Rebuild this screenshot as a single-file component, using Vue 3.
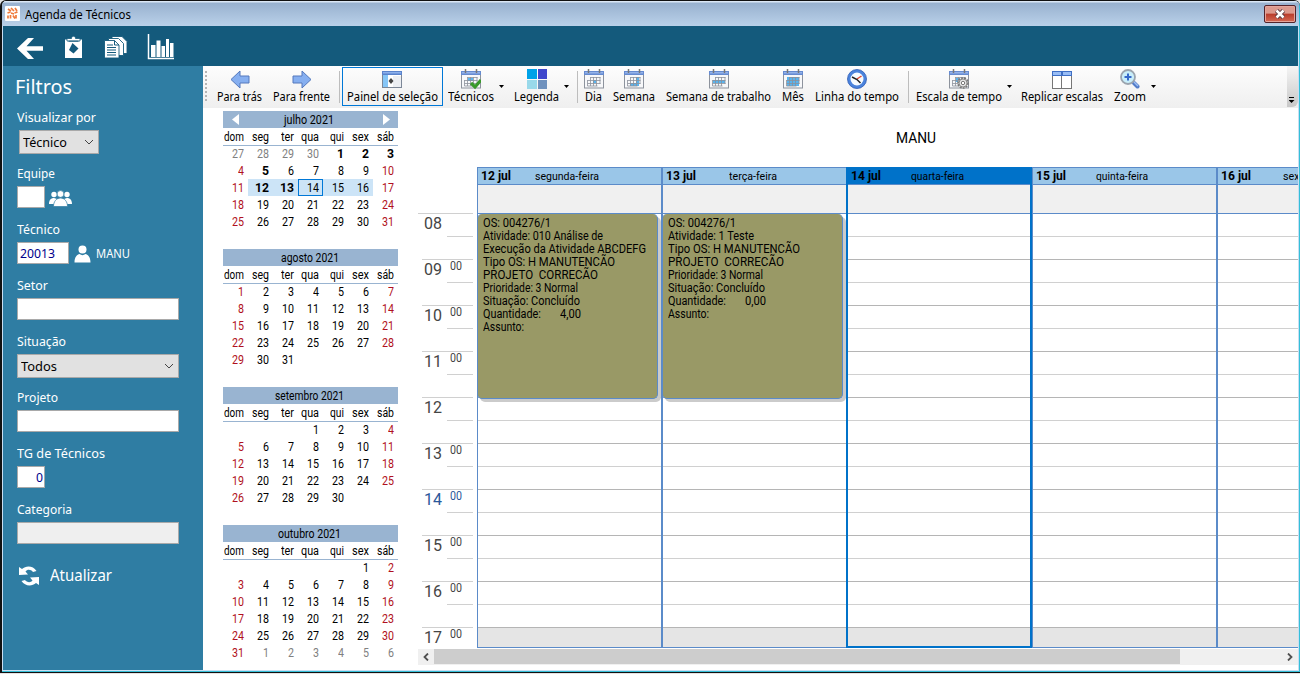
<script setup>
// v-fit sets a text run to the given width in pixels
const vFit = {
  mounted(el, { value }) {
    if (!value) return
    const natural = el.getBoundingClientRect().width
    if (!natural) return
    el.style.transform = `scaleX(${value / natural})`
    el.style.marginRight = `${value - natural}px`
  },
}

const tools = [
  { label: 'Para trás', w: 45, gap: 10, icon: 'back' },
  { label: 'Para frente', w: 57, gap: 11, icon: 'forward' },
  { sep: true, gap: 9 },
  { label: 'Painel de seleção', w: 91, gap: 2, icon: 'panel', active: true },
  { label: 'Técnicos', w: 46, gap: 5, icon: 'cal-check' },
  { arrow: true, gap: 5 },
  { label: 'Legenda', w: 45, gap: 10, icon: 'legend' },
  { arrow: true, gap: 5 },
  { sep: true, gap: 8 },
  { label: 'Dia', w: 17, gap: 7, icon: 'cal-1' },
  { label: 'Semana', w: 42, gap: 11, icon: 'cal-2' },
  { label: 'Semana de trabalho', w: 105, gap: 11, icon: 'cal-3' },
  { label: 'Mês', w: 22, gap: 11, icon: 'cal-4' },
  { label: 'Linha do tempo', w: 84, gap: 11, icon: 'clock' },
  { sep: true, gap: 9 },
  { label: 'Escala de tempo', w: 86, gap: 7, icon: 'cal-gear' },
  { arrow: true, gap: 5 },
  { label: 'Replicar escalas', w: 82, gap: 9, icon: 'split' },
  { label: 'Zoom', w: 32, gap: 11, icon: 'zoom' },
  { arrow: true, gap: 5 },
]
const highlights = {
  'cal-1': [[9, 11, 3, 3]],
  'cal-2': [[6, 14, 9, 3], [12, 8, 3, 6]],
  'cal-3': [[4, 11, 12, 3]],
  'cal-4': [[4, 8, 12, 9]],
  'cal-check': [[7, 9, 5, 3]],
  'cal-gear': [[7, 9, 4, 4]],
}

const weekdays = [
  ['dom', 20], ['seg', 17], ['ter', 13], ['qua', 18], ['qui', 14], ['sex', 17], ['sáb', 17],
]
function month(name, w, before, offset, count, after = 0, bold = []) {
  const cells = []
  for (let i = 0; i < offset; i++) cells.push({ n: before ? before + i : '', out: true })
  for (let d = 1; d <= count; d++) {
    const col = (offset + d - 1) % 7
    const isBold = bold.includes(d)
    cells.push({ n: d, bold: isBold, red: !isBold && (col === 0 || col === 6) })
  }
  for (let d = 1; d <= after; d++) cells.push({ n: d, out: true })
  return { name, w, cells }
}
const months = [
  month('julho 2021', 50, 27, 4, 31, 0, [1, 2, 3, 5, 12, 13]),
  month('agosto 2021', 58, 0, 0, 31),
  month('setembro 2021', 69, 0, 3, 30),
  month('outubro 2021', 63, 0, 5, 31, 6),
]
months[0].cells.forEach((c) => {
  if (!c.out && c.n >= 12 && c.n <= 16) c.sel = true
  if (c.n === 14) c.today = true
})
const numW = (c) => (String(c.n).length === 2 ? (c.bold ? 14 : 12) : c.n === '' ? 0 : c.bold ? 7 : 6)

const hours = ['08', '09', '10', '11', '12', '13', '14', '15', '16', '17']
const days = [
  {
    date: '12 jul', dw: 30, name: 'segunda-feira', w: 64, at: 57,
    lines: [
      ['OS: 004276/1', 68], ['Atividade: 010 Análise de', 120], ['Execução da Atividade ABCDEFG', 163],
      ['Tipo OS: H MANUTENCÃO', 132], ['PROJETO  CORRECÃO', 115], ['Prioridade: 3 Normal', 95],
      ['Situação: Concluído', 97], ['Quantidade:', 58, '4,00', 21], ['Assunto:', 41],
    ],
  },
  {
    date: '13 jul', dw: 30, name: 'terça-feira', w: 48, at: 66,
    lines: [
      ['OS: 004276/1', 68], ['Atividade: 1 Teste', 86], ['Tipo OS: H MANUTENCÃO', 132],
      ['PROJETO  CORRECÃO', 116], ['Prioridade: 3 Normal', 95], ['Situação: Concluído', 97],
      ['Quantidade:', 58, '0,00', 21], ['Assunto:', 41],
    ],
  },
  { date: '14 jul', dw: 30, name: 'quarta-feira', w: 53, at: 63, today: true },
  { date: '15 jul', dw: 30, name: 'quinta-feira', w: 52, at: 63 },
  { date: '16 jul', dw: 30, name: 'sexta-feira', w: 50, at: 65 },
]
</script>

<template>
  <div class="window">
    <header class="title">
      <svg class="logo" width="15" height="15" viewBox="0 0 15 15">
        <rect width="15" height="15" rx="1" fill="#fff" />
        <g stroke="#ef7a3b" stroke-width="1.7" fill="none">
          <path d="M3 3l3 2M6 2l3 3M10 2l2 3M2.5 7l3-1M6 7l3 1M9.500 7l3-1M3 9.500v3M5.500 9v3.500M8 9.500l2 3M11 9v3.500" />
        </g>
      </svg>
      <span v-fit="106">Agenda de Técnicos</span>
      <div class="close">
        <svg width="12" height="10" viewBox="0 0 12 10">
          <path d="M2.500 1.500L9.500 8.500M9.500 1.500L2.500 8.500" stroke="#593a42" stroke-width="4.400" />
          <path d="M2.500 1.500L9.500 8.500M9.500 1.500L2.500 8.500" stroke="#fff" stroke-width="2.500" />
        </svg>
      </div>
    </header>

    <nav class="topbar">
      <svg width="180" height="40" viewBox="0 0 180 40">
        <path d="M14 22.500L25 12h6l-7.500 8.200H40v4.500H23.500L31 33h-6z" fill="#fff" />
        <path d="M62 13.500h17v18.500H62z" fill="#fff" />
        <path d="M64 15v-2.500h4.500c0-3 4-3 4 0h4.500V15z" fill="#fff" stroke="#145a7c" stroke-width=".8" />
        <path d="M65.500 15.200h10" stroke="#145a7c" />
        <path d="M69.500 17l6 5.500-5 5-4.500-3.500z" fill="#145a7c" />
        <g fill="#fff" stroke="#145a7c" stroke-width=".9">
          <path d="M109 10.500h10l5 5v12h-15z" />
          <path d="M105.500 12.500h10l5 5v12h-15z" />
          <path d="M101.500 14.500h10l4.500 4.500V32h-14.500z" />
        </g>
        <path d="M104 19h6M104 21.500h9M104 24h9M104 26.500h9M104 29h9M111.500 14.500V19h4.500" stroke="#145a7c" fill="none" />
        <path d="M145.500 8v24.500H171" stroke="#fff" stroke-width="1.500" fill="none" />
        <path d="M148 19h4.500v12H148zM153.500 14.500h4v16.500h-4zM158.500 20h3.500v11h-3.500zM163 13h3v18h-3zM167 17h3.500v14H167z" fill="#fff" />
      </svg>
    </nav>

    <div class="body">
      <aside class="side">
        <h1><span v-fit="57">Filtros</span></h1>
        <div class="group">
          <label><span v-fit="79">Visualizar por</span></label>
          <div class="field select short"><span v-fit="44">Técnico</span>
            <svg width="10" height="6" viewBox="0 0 10 6"><path d="M1 1l4 4 4-4" /></svg>
          </div>
        </div>
        <div class="group">
          <label><span v-fit="38">Equipe</span></label>
          <div class="line"><div class="field w28"></div>
            <svg class="people" width="23" height="17" viewBox="0 0 23 17">
              <circle cx="5" cy="4.500" r="2.700" /><circle cx="18" cy="4.500" r="2.700" />
              <path d="M0 14c0-4 2-6 5-6l3 1-3 5zM23 14c0-4-2-6-5-6l-3 1 3 5z" />
              <g class="front"><circle cx="11.500" cy="4" r="3.400" /><path d="M4.500 16.500c0-5 3-8.500 7-8.500s7 3.500 7 8.500z" /></g>
            </svg>
          </div>
        </div>
        <div class="group">
          <label><span v-fit="43">Técnico</span></label>
          <div class="line"><div class="field w52 blue"><span v-fit="35">20013</span></div>
            <svg class="person" width="17" height="18" viewBox="0 0 17 18">
              <circle cx="8.500" cy="4.500" r="4" /><path d="M.5 17.500c0-5.500 2.500-8 5-8.500 2 1.500 4 1.500 6 0 2.500.5 5 3 5 8.500z" />
            </svg>
            <span v-fit="34">MANU</span>
          </div>
        </div>
        <div class="group"><label><span v-fit="31">Setor</span></label><div class="field"></div></div>
        <div class="group">
          <label><span v-fit="49">Situação</span></label>
          <div class="field select"><span v-fit="36">Todos</span>
            <svg width="10" height="6" viewBox="0 0 10 6"><path d="M1 1l4 4 4-4" /></svg>
          </div>
        </div>
        <div class="group"><label><span v-fit="41">Projeto</span></label><div class="field"></div></div>
        <div class="group">
          <label><span v-fit="88">TG de Técnicos</span></label>
          <div class="field w28 blue right"><span v-fit="7">0</span></div>
        </div>
        <div class="group"><label><span v-fit="55">Categoria</span></label><div class="field off"></div></div>
        <div class="refresh">
          <svg width="20" height="20" viewBox="0 0 20 20">
            <path d="M0 1l3 2C7-.5 14-.5 17.500 5l-3.500 1C12 3.500 8.500 3 6.500 5.500L9 8.500 0 9z" />
            <path d="M20 19l-3-2C13 20.500 6 20.500 2.500 15L6 14c2 2.500 5.500 3 7.500.5L11 11.500l9-.5z" />
          </svg>
          <span v-fit="62">Atualizar</span>
        </div>
      </aside>

      <main class="main">
        <div class="toolbar">
          <div class="grip"></div>
          <template v-for="(t, i) in tools" :key="i">
            <i v-if="t.sep" class="sep" :style="{ marginLeft: t.gap + 'px' }"></i>
            <i v-else-if="t.arrow" class="arrow" :style="{ marginLeft: t.gap + 'px' }"></i>
            <div v-else class="tool" :class="{ active: t.active }" :style="{ marginLeft: t.gap + 'px', width: (t.active ? 101 : t.w) + 'px' }">
              <svg width="20" height="21" viewBox="0 0 20 21">
                <path v-if="t.icon === 'back'" d="M1 10.500L10 2v5h9v7h-9v5z" class="arr" />
                <path v-else-if="t.icon === 'forward'" d="M19 10.500L10 2v5H1v7h9v5z" class="arr" />
                <g v-else-if="t.icon === 'panel'">
                  <rect x=".5" y="2.500" width="19" height="16" fill="#fff" stroke="#7c8797" />
                  <path d="M1 6h5v12H1z" fill="#86c6f7" /><path d="M0 2h20v4H0z" fill="#5a83cc" /><path d="M1 3h18v1.500H1z" fill="#8bb0ec" />
                  <path d="M11 7h8v11h-8z" fill="#eceef2" /><path d="M9 9l2.500 3L9 15l-2.500-3z" fill="#444" />
                </g>
                <g v-else-if="t.icon === 'legend'">
                  <path d="M0 0h10v10H0z" fill="#00a2e8" /><path d="M11 0h9v10h-9z" fill="#3f48cc" />
                  <path d="M0 11h10v9H0z" fill="#99d9ea" /><path d="M11 11h9v9h-9z" fill="#7092be" />
                </g>
                <g v-else-if="t.icon === 'clock'">
                  <circle cx="10" cy="10" r="8" fill="#f6fbff" stroke="#4b83dc" stroke-width="3" />
                  <circle cx="10" cy="10" r="9.500" fill="none" stroke="#2d5cb5" stroke-width=".8" />
                  <path d="M10 10L14.500 7" stroke="#e54c35" stroke-width="1.500" /><path d="M5 8l5 2.500 3.500 3.500" stroke="#222" stroke-width="1.500" fill="none" />
                </g>
                <g v-else-if="t.icon === 'split'">
                  <rect x=".5" y="2.500" width="19" height="17" fill="#fff" stroke="#767676" /><path d="M0 2h20v5H0z" fill="#3f6fc5" />
                  <path d="M1 3h8v3H1zM11 3h8v3h-8z" fill="#99bdf5" /><path d="M9.500 7v12" stroke="#777" />
                </g>
                <g v-else-if="t.icon === 'zoom'">
                  <path d="M14 14l3.500 3.500" stroke="#547dc8" stroke-width="4" stroke-linecap="round" /><path d="M14 13l4 4" stroke="#9dbff5" stroke-width="1.500" />
                  <circle cx="8" cy="8" r="7" fill="#c9eefa" stroke="#9ba4ae" stroke-width="1.800" /><path d="M8 4.500v7M4.500 8h7" stroke="#3668ca" stroke-width="2" />
                </g>
                <g v-else>
                  <rect x=".5" y="2.500" width="19" height="16.500" fill="#f7f8fa" stroke="#8d939d" />
                  <path d="M0 2h20v4H0z" fill="#668bd0" /><path d="M1 3h18v1.500H1z" fill="#94b3ea" />
                  <path d="M4.500 0v4M15.500 0v4" stroke="#777" stroke-width="1.500" />
                  <rect v-for="(h, k) in highlights[t.icon]" :key="k" :x="h[0]" :y="h[1]" :width="h[2]" :height="h[3]" fill="#59b4ef" />
                  <path d="M6.500 8.500h10M3.500 11.500h13M3.500 14.500h13M3.500 17h10M3.500 11v6M6.500 8v9M9.500 8v9M12.500 8v9M16 8v7" stroke="#8b919a" stroke-width=".8" fill="none" />
                  <path v-if="t.icon === 'cal-check'" d="M10 14l4 4 6-7" fill="none" stroke="#39992b" stroke-width="3.200" />
                  <g v-if="t.icon === 'cal-gear'">
                    <circle cx="14" cy="14" r="5" fill="#e5e5e5" stroke="#777" stroke-width="1.600" stroke-dasharray="2 1" />
                    <circle cx="14" cy="14" r="4" fill="#e5e5e5" stroke="#777" stroke-width=".8" /><circle cx="14" cy="14" r="1.700" fill="#fff" stroke="#777" />
                  </g>
                </g>
              </svg>
              <span v-fit="t.w">{{ t.label }}</span>
            </div>
          </template>
          <div class="overflow"><i></i><b></b></div>
        </div>

        <div class="content">
          <section class="months">
            <div v-for="(m, mi) in months" :key="m.name" class="month">
              <div class="mhead">
                <svg v-if="mi === 0" width="7" height="11" viewBox="0 0 7 11"><path d="M7 0v11L0 5.500z" fill="#fff" /></svg>
                <span v-fit="m.w">{{ m.name }}</span>
                <svg v-if="mi === 0" width="7" height="11" viewBox="0 0 7 11"><path d="M0 0v11l7-5.500z" fill="#fff" /></svg>
              </div>
              <div class="grid dow"><div v-for="d in weekdays" :key="d[0]"><span v-fit="d[1]">{{ d[0] }}</span></div></div>
              <div class="grid nums">
                <div v-for="(c, ci) in m.cells" :key="ci" :class="{ out: c.out, red: c.red, bold: c.bold, sel: c.sel, today: c.today }">
                  <span v-fit="numW(c)">{{ c.n }}</span>
                </div>
              </div>
            </div>
          </section>

          <section class="agenda">
            <div class="resource"><span v-fit="40">MANU</span></div>
            <div class="board">
              <div class="ruler">
                <div v-for="h in hours" :key="h" class="hour" :class="{ first: h === '08', now: h === '14' }">
                  <span v-fit="18" class="big">{{ h }}</span>
                  <div class="half"><span v-if="h !== '08' && h !== '12'" v-fit="12">00</span></div>
                </div>
              </div>
              <div class="days">
                <div v-for="d in days" :key="d.date" class="day" :class="{ today: d.today }">
                  <div class="dhead">
                    <div class="date"><b v-fit="d.dw">{{ d.date }}</b></div>
                    <div :style="{ marginLeft: d.at - 32 + 'px' }"><span v-fit="d.w">{{ d.name }}</span></div>
                  </div>
                  <div class="allday"></div>
                  <div class="slots">
                    <div v-for="n in 19" :key="n" class="slot"></div>
                    <div v-if="d.lines" class="event">
                      <div v-for="(l, li) in d.lines" :key="li" class="eline">
                        <span v-fit="l[1]">{{ l[0] }}</span><span v-if="l[2]" v-fit="l[3]" class="qty">{{ l[2] }}</span>
                      </div>
                    </div>
                  </div>
                </div>
              </div>
            </div>
            <div class="scroll">
              <div class="btn"><svg width="6" height="8" viewBox="0 0 6 8"><path d="M5 .5L1.500 4 5 7.500" /></svg></div>
              <div class="thumb"></div>
              <div class="btn end"><svg width="6" height="8" viewBox="0 0 6 8"><path d="M1 .5L4.500 4 1 7.500" /></svg></div>
            </div>
          </section>
        </div>
      </main>
    </div>
  </div>
</template>

<style>
body { background: #e4e4e4; overflow: hidden; }
</style>

<style scoped>
* { box-sizing: border-box; }
svg { display: block; flex: none; }
span, b { display: inline-block; white-space: pre; transform-origin: 0 50%; flex: none; }
.window { width: 1300px; height: 673px; border: solid #111; border-width: 1px 0 1px 2px; border-radius: 6px 6px 0 0; background: #c9def2; display: flex; flex-direction: column; overflow: hidden; font-family: "Noto Sans", "Open Sans", sans-serif; font-size: 12px; color: #000; box-shadow: inset -1px -1px #35bfd8; padding: 0 2px 2px 1px; }
.title { height: 25px; flex: none; margin: 0 -1px; background: linear-gradient(#dbe7f5 0 1px, #98b1cf 2px, #bad1e9); display: flex; align-items: center; padding: 2px 3px 0 3px; gap: 5px; line-height: 20px; }
.logo { margin-top: -2px; }
.close { margin: -2px 0 0 auto; width: 32px; height: 18px; border: 1px solid #53242b; border-radius: 2px; box-shadow: inset 0 0 0 1px #e5a59b; background: linear-gradient(#dc9a8e 0 45%, #b93c2b 50%, #d56a55); display: flex; align-items: center; justify-content: center; }
.topbar { height: 40px; flex: none; background: #145a7c; }
.body { flex: 1; display: flex; min-height: 0; }
.side { width: 200px; flex: none; background: #2f7da3; color: #fff; }
h1 { margin: 0; height: 42px; padding: 0 0 0 12px; font-weight: 400; font-size: 20px; line-height: 41px; }
.group { height: 56px; padding-left: 14px; }
label { display: block; height: 22px; line-height: 20px; }
.line { display: flex; align-items: center; }
.field { width: 162px; height: 22px; background: #fff; border: 1px solid #a9a9a9; display: flex; align-items: center; padding: 0 2px; color: #000; font-size: 12.500px; }
.select { height: 24px; background: #e1e1e1; justify-content: space-between; padding: 0 4px 0 3px; }
.select svg { fill: none; stroke: #444; }
.short { width: 80px; margin-left: 2px; }
.w28 { width: 28px; }
.w52 { width: 52px; }
.blue { color: #00008b; }
.right { justify-content: flex-end; padding-right: 1px; }
.off { background: #efefef; }
.people { margin: 3px 0 0 4px; fill: #fff; }
.front { stroke: #2f7da3; stroke-width: .7; }
.person { margin: 2px 5px 0 5px; fill: #fff; }
.refresh { display: flex; align-items: center; gap: 11px; height: 24px; margin: 8px 0 0 16px; font-size: 16px; line-height: 22px; }
.refresh span { margin-top: -2px; }
.refresh svg { fill: #fff; }
.main { flex: 1; min-width: 0; background: #fff; display: flex; flex-direction: column; }
.toolbar { height: 42px; flex: none; background: linear-gradient(#fdfdfd, #efefef); display: flex; }
.grip { width: 2px; height: 30px; margin: 5px 0 0 2px; background: repeating-linear-gradient(#b5b5b5 0 2px, transparent 2px 4px); }
.tool { display: flex; flex-direction: column; align-items: center; flex: none; padding-top: 3px; }
.tool span { line-height: 16px; margin-top: -1px; }
.active { height: 39px; margin-top: 1px; padding-top: 1px; border: 1px solid #0078d7; }
.active svg { margin-left: -2px; }
.arr { fill: #86aff0; stroke: #5479bd; stroke-linejoin: round; }
.sep { width: 1px; height: 32px; margin-top: 5px; background: #bdbdbd; flex: none; }
.arrow { width: 5px; height: 3px; margin-top: 19px; flex: none; background: #000; clip-path: polygon(0 0, 100% 0, 50% 100%); }
.overflow { margin-left: auto; width: 11px; height: 41px; background: linear-gradient(#f5f5f5, #c8c8c8); border-radius: 0 0 6px 0; display: flex; flex-direction: column; align-items: center; justify-content: flex-end; gap: 2px; padding: 0 2px 4px 0; }
.overflow i { width: 5px; height: 1px; background: #000; }
.overflow b { width: 6px; height: 3px; background: #000; clip-path: polygon(0 0, 100% 0, 50% 100%); }
.content { flex: 1; min-height: 0; display: flex; font-family: Roboto, "Liberation Sans", sans-serif; }
.months { width: 195px; flex: none; padding: 3px 0 0 20px; }
.month { width: 175px; height: 138px; line-height: 17px; }
.mhead { height: 17px; background: #99b4d1; display: flex; justify-content: center; align-items: center; }
.mhead span { position: relative; top: 1px; left: -1px; }
.mhead svg:first-child { margin-right: 46px; }
.mhead svg:last-child { margin-left: 48px; }
.grid { display: grid; grid-template-columns: repeat(7, 25px); grid-auto-rows: 17px; }
.grid div { display: flex; justify-content: flex-end; padding-right: 4px; }
.dow { height: 18px; border-bottom: 1px solid #99b4d1; margin-bottom: -1px; }
.dow span { margin-top: 1px; position: relative; left: -.5px; }
.nums span { position: relative; top: 1px; }
.out { color: #808080; }
.red { color: #b01020; }
.bold { font-weight: 700; }
.sel { background: #cce4f7; }
.grid .today { border: 1px solid #0078d7; padding-right: 3px; line-height: 15px; }
.agenda { flex: 1; min-width: 0; padding-left: 20px; }
.resource { height: 59px; display: flex; justify-content: center; align-items: center; font-size: 14px; padding-left: 116px; }
.board { display: flex; height: 481px; overflow: hidden; }
.ruler { width: 59px; flex: none; padding-top: 46px; }
.hour { height: 46px; margin: 0 4px; border-top: 1px solid #d0d0d0; display: flex; color: #454545; }
.hour.first { margin-left: 0; padding-left: 4px; }
.hour .big { height: 20px; font-size: 16.500px; line-height: 19px; margin-left: 2px; }
.half { width: 26px; height: 23px; margin-left: auto; border-bottom: 1px solid #d0d0d0; padding-left: 3px; line-height: 13px; }
.half span { font-size: 12px; }
.hour.now { color: #2a579a; }
.days { display: flex; flex: 1; min-width: 0; overflow: hidden; }
.day { width: 185px; flex: none; border: 1px solid #5b8bc9; }
.dhead { height: 17px; background: #9ac6e8; border-bottom: 1px solid #5b8bc9; display: flex; line-height: 16px; font-size: 11.500px; }
.date { width: 32px; padding-left: 3px; font-size: 12px; }
.allday { height: 29px; background: #f0f0f0; border-bottom: 1px solid #5b8bc9; }
.slots { position: relative; height: 433px; }
.slot { height: 23px; border-bottom: 1px solid #d0d0d0; }
.slot:nth-child(even) { border-color: #b5b5b5; }
.slot:nth-child(19) { height: 19px; border: 0; background: #e5e5e5; }
.day.today { position: relative; border-color: #0072c9; border-width: 1px 2px 2px 1px; box-shadow: -1px 0 #0072c9; }
.today .dhead { background: #0072c9; }
.today .slots { height: 432px; }
.today .slot:nth-child(19) { height: 18px; }
.event { position: absolute; left: -1px; top: 0; width: 181px; height: 185px; background: #999966; border: solid #5b8bc9; border-width: 0 1px 1px 1px; border-radius: 5px; box-shadow: 3px 3px #cbcbcb; padding: 3px 0 0 5px; font-size: 12px; line-height: 13px; }
.eline { height: 13px; display: flex; }
.qty { margin-left: 19px; }
.scroll { height: 16px; margin-top: 1px; background: #f0f0f0; display: flex; }
.btn { width: 16px; display: flex; align-items: center; justify-content: center; }
.btn svg { fill: none; stroke: #505050; stroke-width: 1.800; }
.thumb { width: 746px; height: 15px; background: #cdcdcd; }
.end { margin-left: auto; }
</style>
